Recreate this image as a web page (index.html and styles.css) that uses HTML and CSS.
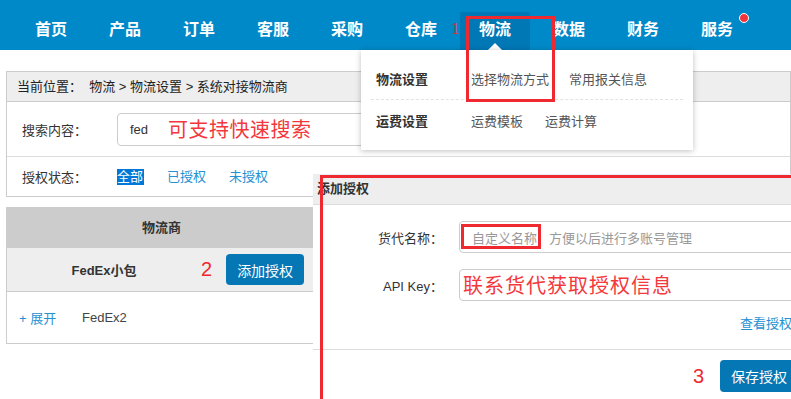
FILE: index.html
```html
<!DOCTYPE html>
<html lang="zh-CN">
<head>
<meta charset="utf-8">
<title>系统对接物流商</title>
<link rel="stylesheet" href="styles.css">
</head>
<body>
<header class="nav">
  <ul class="nav-list">
    <li class="nav-item">首页</li>
    <li class="nav-item">产品</li>
    <li class="nav-item">订单</li>
    <li class="nav-item">客服</li>
    <li class="nav-item">采购</li>
    <li class="nav-item">仓库</li>
    <li class="nav-item active">物流</li>
    <li class="nav-item">数据</li>
    <li class="nav-item">财务</li>
    <li class="nav-item has-dot">服务<span class="dot"></span></li>
  </ul>
  <span class="mark mark-1">1</span>
</header>

<main class="page">
  <div class="crumb">当前位置：&nbsp; 物流 &gt; 物流设置 &gt; 系统对接物流商</div>
  <div class="filter">
    <div class="filter-row search-row">
      <span class="label">搜索内容：</span>
      <div class="search-box"><span class="val">fed</span><span class="note">可支持快速搜索</span></div>
    </div>
    <div class="filter-row status-row">
      <span class="label">授权状态：</span>
      <div class="tabs">
        <span class="tab sel">全部</span>
        <span class="tab">已授权</span>
        <span class="tab">未授权</span>
      </div>
    </div>
  </div>

  <div class="carrier-table">
    <div class="th">物流商</div>
    <div class="tr group">
      <span class="name">FedEx小包</span>
      <span class="num">2</span>
      <button class="btn">添加授权</button>
    </div>
    <div class="tr sub">
      <span class="expand">+ 展开</span>
      <span class="sub-name">FedEx2</span>
    </div>
  </div>
</main>

<div class="dropdown">
  <div class="dd-row">
    <span class="dd-head">物流设置</span>
    <span class="dd-link">选择物流方式</span>
    <span class="dd-link">常用报关信息</span>
  </div>
  <div class="dd-row">
    <span class="dd-head">运费设置</span>
    <span class="dd-link">运费模板</span>
    <span class="dd-link">运费计算</span>
  </div>
</div>

<section class="modal">
  <div class="modal-head">添加授权</div>
  <div class="modal-body">
    <div class="form-row">
      <span class="f-label">货代名称：</span>
      <div class="f-input"><span class="ph">自定义名称</span><span class="ph ph-2">方便以后进行多账号管理</span></div>
    </div>
    <div class="form-row">
      <span class="f-label">API Key：</span>
      <div class="f-input"><span class="note note-key">联系货代获取授权信息</span></div>
    </div>
    <div class="link-row"><span class="link">查看授权</span></div>
  </div>
  <div class="modal-foot">
    <span class="num">3</span>
    <button class="btn">保存授权</button>
  </div>
</section>

<div class="redbox rb-nav"></div>
<div class="redbox rb-name"></div>
<div class="redbox rb-modal"></div>
</body>
</html>
```

FILE: styles.css
```css
* { box-sizing: border-box; }

html, body {
  margin: 0;
  padding: 0;
}

body {
  width: 791px;
  height: 399px;
  overflow: hidden;
  position: relative;
  background: #fff;
  font-family: "Liberation Sans", "Noto Sans CJK SC", sans-serif;
  font-size: 13px;
  color: #333;
}

/* ---------- nav ---------- */
.nav {
  position: relative;
  height: 50px;
  background: #0089c8;
}

.nav-list {
  display: flex;
  margin: 0;
  padding: 0 0 0 14px;
  list-style: none;
}

.nav-item {
  position: relative;
  flex: none;
  width: 74px;
  height: 38px;
  margin-top: 12px;
  line-height: 36px;
  text-align: center;
  color: #fff;
  font-size: 16px;
  font-weight: bold;
}

.nav-item.active {
  background: #0078b6;
  margin-left: 2px;
  margin-right: 2px;
  width: 70px;
  border-radius: 2px 2px 0 0;
}

.nav-item.active::after {
  content: "";
  position: absolute;
  left: 50%;
  bottom: 0;
  margin-left: -7px;
  border-left: 7px solid transparent;
  border-right: 7px solid transparent;
  border-bottom: 7px solid #fff;
}

.dot {
  position: absolute;
  right: 5px;
  top: 1px;
  width: 10px;
  height: 10px;
  border-radius: 50%;
  background: #f2353a;
  border: 1px solid #fff;
}

.mark {
  color: #f0282e;
  font-family: "Liberation Serif", serif;
}

.mark-1 {
  position: absolute;
  left: 451px;
  top: 19px;
  font-size: 17px;
}

/* ---------- page ---------- */
.page {
  width: 785px;
  margin: 21px 0 0 6px;
}

.crumb {
  height: 31px;
  line-height: 29px;
  padding-left: 10px;
  background: #eee;
  border: 1px solid #ccc;
  color: #222;
}

.filter {
  border: 1px solid #ccc;
  border-top: 0;
}

.filter-row {
  display: flex;
  align-items: center;
  padding-left: 15px;
}

.search-row {
  height: 55px;
  border-bottom: 1px solid #ddd;
}

.status-row {
  height: 39px;
}

.label {
  flex: none;
  width: 95px;
  color: #333;
}

.search-box {
  display: flex;
  align-items: center;
  flex: none;
  width: 420px;
  height: 33px;
  padding-left: 12px;
  border: 1px solid #ccc;
  border-radius: 4px;
}

.val {
  color: #333;
  width: 38px;
}

.note {
  color: #f2383d;
  font-family: "Noto Sans CJK SC", sans-serif;
  font-size: 20px;
  letter-spacing: 0.5px;
  line-height: 24px;
}

.tabs {
  display: flex;
  gap: 23px;
}

.tab {
  color: #2590d2;
  line-height: 16px;
}

.tab.sel {
  background: #0078d7;
  color: #fff;
  padding-right: 1px;
}

/* ---------- table ---------- */
.carrier-table {
  width: 310px;
  margin-top: 10px;
  border-left: 1px solid #ccc;
}

.th {
  height: 41px;
  line-height: 41px;
  text-align: center;
  background: #ccc;
  font-weight: bold;
  color: #333;
}

.tr {
  display: flex;
  align-items: center;
  border-bottom: 1px solid #ccc;
}

.group {
  height: 44px;
  background: #eee;
}

.name {
  flex: none;
  width: 194px;
  text-align: center;
  font-weight: bold;
  color: #333;
}

.num {
  color: #f0282e;
  font-size: 20px;
  font-weight: 300;
  font-family: "Liberation Sans", sans-serif;
}

.group .num {
  margin-right: 14px;
}

.btn {
  flex: none;
  width: 78px;
  height: 31px;
  padding: 0;
  border: 0;
  border-radius: 4px;
  background: #0577b5;
  color: #fff;
  font-family: "Noto Sans CJK SC", sans-serif;
  font-size: 14px;
}

.sub {
  height: 52px;
  padding-left: 12px;
}

.expand {
  color: #2590d2;
  width: 63px;
}

.sub-name {
  color: #444;
}

/* ---------- dropdown ---------- */
.dropdown {
  position: absolute;
  left: 361px;
  top: 50px;
  width: 332px;
  height: 100px;
  padding: 8px 10px 0;
  background: #fff;
  box-shadow: 0 1px 6px rgba(0, 0, 0, 0.25);
}

.dd-row {
  display: flex;
  align-items: center;
  gap: 20px;
  height: 41px;
  padding-left: 5px;
}

.dd-row + .dd-row {
  border-top: 1px dashed #e2e2e2;
}

.dd-head {
  width: 75px;
  font-weight: bold;
  color: #333;
}

.dd-link {
  color: #555;
}

.dd-row + .dd-row .dd-link + .dd-link {
  margin-left: 2px;
}

/* ---------- modal ---------- */
.modal {
  position: absolute;
  left: 313px;
  top: 174px;
  right: 0;
  bottom: 0;
  overflow: hidden;
  background: #fff;
}

.modal-head {
  height: 31px;
  line-height: 29px;
  padding-left: 4px;
  background: #eee;
  border-bottom: 1px solid #ddd;
  font-weight: bold;
  color: #333;
}

.modal-body {
  padding-top: 16px;
}

.form-row {
  display: flex;
  align-items: center;
  margin-bottom: 16px;
}

.f-label {
  flex: none;
  width: 130px;
  text-align: right;
  color: #333;
}

.f-input {
  display: flex;
  align-items: center;
  flex: none;
  width: 400px;
  height: 32px;
  margin-left: 16px;
  padding-left: 12px;
  border: 1px solid #ccc;
  border-radius: 4px;
  white-space: nowrap;
}

.ph {
  color: #999;
}

.ph-2 {
  margin-left: 12px;
}

.note-key {
  margin-left: -9px;
  letter-spacing: 1px;
}

.link-row {
  margin-top: -4px;
  height: 36px;
  text-align: right;
  line-height: 22px;
  white-space: nowrap;
}

.link {
  display: inline-block;
  margin-right: -1px;
  color: #2590d2;
}

.modal-foot {
  display: flex;
  justify-content: flex-end;
  align-items: center;
  gap: 16px;
  padding: 10px 0 0 0;
  border-top: 1px solid #ddd;
}

.modal-foot .btn {
  height: 32px;
  margin-right: -7px;
}

/* ---------- annotation boxes ---------- */
.redbox {
  position: absolute;
  border: 3px solid #ee2a30;
}

.rb-nav {
  left: 466px;
  top: 16px;
  width: 89px;
  height: 86px;
}

.rb-name {
  left: 461px;
  top: 224px;
  width: 80px;
  height: 25px;
}

.rb-modal {
  left: 320px;
  top: 175px;
  right: 0;
  bottom: 0;
  border-right: 0;
  border-bottom: 0;
}
```
